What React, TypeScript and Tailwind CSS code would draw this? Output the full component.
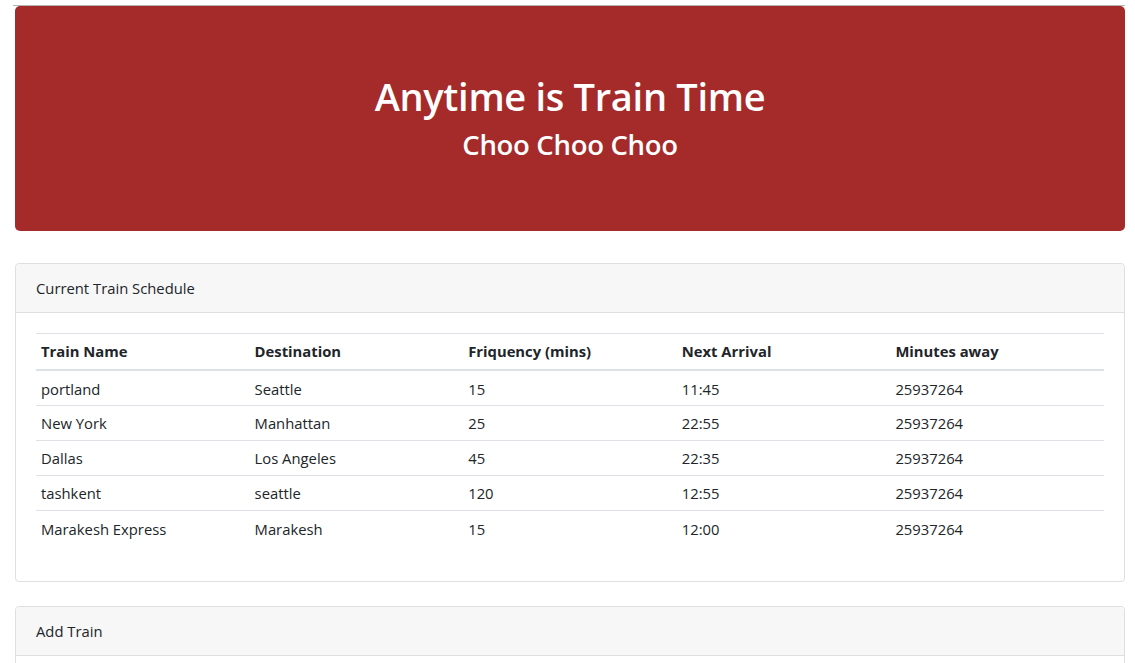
import React from "react";

const rows = [
  ["portland", "Seattle", "15", "11:45", "25937264"],
  ["New York", "Manhattan", "25", "22:55", "25937264"],
  ["Dallas", "Los Angeles", "45", "22:35", "25937264"],
  ["tashkent", "seattle", "120", "12:55", "25937264"],
  ["Marakesh Express", "Marakesh", "15", "12:00", "25937264"],
];

const heads = ["Train Name", "Destination", "Friquency (mins)", "Next Arrival", "Minutes away"];

export default function App() {
  return (
    <div
      className="min-h-[663px] bg-white text-[#212529] pt-[5px] pl-[15px] pr-[10px]"
      style={{ fontFamily: '"Open Sans", "Noto Sans", sans-serif' }}
    >
      <div className="h-px bg-[#b4b4b4] ml-[-2px]" />
      <div className="bg-[#a52a2a] rounded-[5px] h-[225px] flex flex-col items-center justify-center text-white pb-[4px]">
        <h1 className="text-[38px] font-semibold leading-[48px] mb-[8px] tracking-[-0.3px]">Anytime is Train Time</h1>
        <h3 className="text-[27.5px] font-semibold leading-[34px] tracking-[-0.3px]">Choo Choo Choo</h3>
      </div>

      <div className="mt-[32px] border border-[#dfdfdf] rounded-[4px] bg-white">
        <div className="h-[49px] bg-[#f7f7f7] border-b border-[#dfdfdf] px-[20px] pt-[1px] flex items-center text-[14.8px] rounded-t-[4px]">
          Current Train Schedule
        </div>
        <div className="p-[20px]">
          <table className="w-full table-fixed border-collapse text-[14.8px] mb-[15px]">
            <thead>
              <tr className="border-t border-[#dee2e6] border-b-2 border-b-[#dee2e6]">
                {heads.map((h) => (
                  <th key={h} className="text-left font-bold px-[5px] h-[36px] align-middle">
                    {h}
                  </th>
                ))}
              </tr>
            </thead>
            <tbody>
              {rows.map((r, i) => (
                <tr key={i} className={i === 0 ? "h-[36px]" : "border-t border-[#dee2e6]"}>
                  {r.map((c, j) => (
                    <td key={j} className={"px-[5px] align-middle " + (i === 0 ? "h-[36px] pt-[2px]" : "h-[35px] pt-[1px]")}>
                      {c}
                    </td>
                  ))}
                </tr>
              ))}
            </tbody>
          </table>
        </div>
      </div>

      <div className="mt-[24px] border border-[#dfdfdf] rounded-[4px] bg-white">
        <div className="h-[49px] bg-[#f7f7f7] border-b border-[#dfdfdf] px-[20px] pt-[1px] flex items-center text-[14.8px] rounded-t-[4px]">
          Add Train
        </div>
        <div className="h-[60px]" />
      </div>
    </div>
  );
}
